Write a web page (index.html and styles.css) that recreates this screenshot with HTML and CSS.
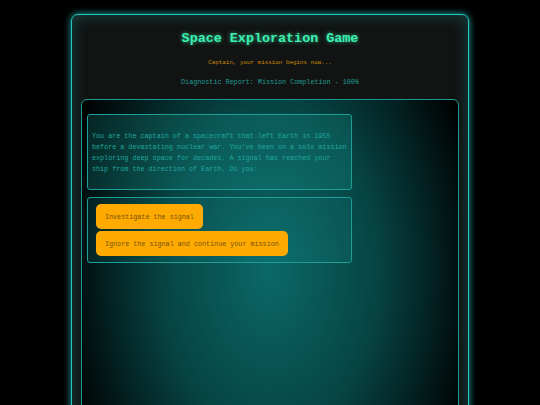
FILE: index.html
```html
<!DOCTYPE html>
<html>
<head>
<meta charset="utf-8">
<link rel="stylesheet" href="styles.css">
</head>
<body>
<div class="console">
  <h1 class="title">Space Exploration Game</h1>
  <p class="subtitle">Captain, your mission begins now...</p>
  <p class="diag">Diagnostic Report: Mission Completion - 100%</p>
  <div class="game">
    <div class="story">
      <p>You are the captain of a spacecraft that left Earth in 1955 before a devastating nuclear war. You've been on a solo mission exploring deep space for decades. A signal has reached your ship from the direction of Earth. Do you:</p>
    </div>
    <div class="choices">
      <button class="choice">Investigate the signal</button>
      <button class="choice">Ignore the signal and continue your mission</button>
    </div>
  </div>
</div>
</body>
</html>
```
FILE: styles.css
```css
html, body {
  margin: 0;
  padding: 0;
  background: #000;
  height: 100%;
  overflow: hidden;
}
body {
  padding-top: 14px;
  font-family: "Liberation Mono", "DejaVu Sans Mono", monospace;
}
.console {
  width: 398px;
  box-sizing: border-box;
  margin: 0 auto;
  border: 1px solid #22c8c0;
  border-radius: 7px;
  background: #121313;
  box-shadow: 0 0 7px rgba(34, 200, 192, 0.85), inset 0 0 16px rgba(34, 200, 192, 0.28);
  padding: 16px 9px 0;
  height: 420px;
}
.title {
  margin: 0;
  text-align: center;
  font-size: 13.4px;
  line-height: 16px;
  font-weight: bold;
  color: #3cf0b0;
  text-shadow: 0 0 4px rgba(60, 240, 176, 0.7);
}
.subtitle {
  margin: 12px 0 0;
  text-align: center;
  font-size: 5.9px;
  line-height: 8px;
  color: #c98c08;
}
.diag {
  margin: 11px 0 0;
  text-align: center;
  font-size: 6.74px;
  line-height: 9px;
  color: #1f9d95;
}
.game {
  margin-top: 12px;
  border: 1px solid #1a9c96;
  border-radius: 6px;
  padding: 14px 5px;
  height: 400px;
  background: radial-gradient(ellipse 215px 330px at 50% 170px, #0b6868 0%, #074444 50%, #000 100%);
  display: flex;
  flex-direction: column;
  gap: 7px;
}
.story {
  width: 265px;
  box-sizing: border-box;
  border: 1px solid #1f9e97;
  border-radius: 3px;
  background: rgba(30, 190, 180, 0.18);
  padding: 9px 4px 8px;
}
.story p {
  margin: 6.7px 0;
  font-size: 6.74px;
  line-height: 11px;
  color: #22a69d;
}
.choices {
  width: 265px;
  box-sizing: border-box;
  border: 1px solid #1f9e97;
  border-radius: 3px;
  background: rgba(30, 190, 180, 0.1);
  padding: 6px 8px;
  display: flex;
  flex-direction: column;
  align-items: flex-start;
  gap: 2px;
}
.choice {
  font-family: "Liberation Mono", "DejaVu Sans Mono", monospace;
  font-size: 6.74px;
  line-height: 8px;
  color: #74520c;
  background: #ffaa00;
  border: none;
  border-radius: 5px;
  padding: 8.5px 9px;
  cursor: pointer;
}
```
